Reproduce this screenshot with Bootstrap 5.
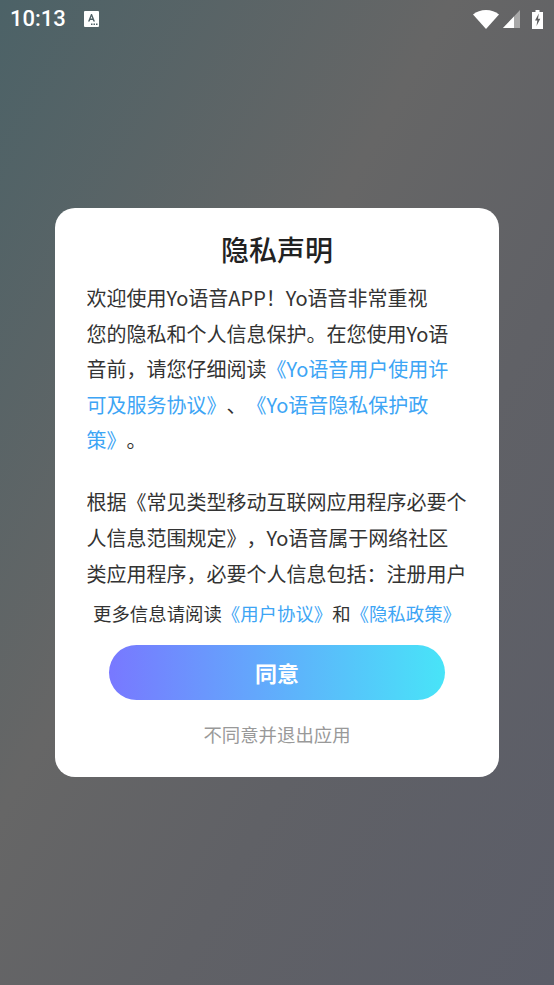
<!DOCTYPE html>
<html lang="zh-CN">
<head>
<meta charset="utf-8">
<title>隐私声明</title>
<link rel="stylesheet" href="https://cdn.jsdelivr.net/npm/bootstrap@5.3.0/dist/css/bootstrap.min.css">
<style>
html,body{height:100%;}
body{margin:0;font-family:"Noto Sans CJK SC","Noto Sans",sans-serif;background:linear-gradient(119deg,#4c6267 0%,#666666 41%,#606166 65%,#5b5d68 100%);overflow:hidden;text-spacing-trim:space-all;}
.stage{width:554px;height:985px;}
.statusline{height:38px;padding:0 11px 0 10px;color:#fff;}
.clock{font-family:Roboto,sans-serif;font-size:22px;font-weight:500;line-height:38px;}
.aicon{margin-left:18px;}
.sheet{width:444px;height:569px;margin:170px 0 0 55px;padding-top:23px;background:#fff;border-radius:20px;}
.sheet-title{font-size:28px;font-weight:500;line-height:36px;color:#222;margin:0;text-align:center;}
.scrollpane{height:322px;margin:13px 32px 0 31.5px;overflow:hidden;font-size:20px;line-height:35.6px;color:#333;}
.scrollpane p{margin:0 0 26.5px;}
.linktext{color:#3da5f5;text-decoration:none;}
.morerow{font-size:18.4px;line-height:26px;color:#333;text-align:center;margin-top:-2px;}
.agree{display:block;width:336px;height:55px;margin:19px auto 0;border:0;border-radius:28px;background:linear-gradient(90deg,#7878ff,#48e4f8);color:#fff;font-size:22px;font-weight:700;line-height:55px;padding:0;}
.decline{font-size:18.4px;line-height:26px;color:#999;text-align:center;margin-top:21px;}
</style>
</head>
<body>
<div class="stage">
  <div class="statusline d-flex align-items-center">
    <span class="clock">10:13</span>
    <svg class="aicon" width="15" height="16" viewBox="0 0 15 16"><rect width="15" height="16" rx="1" fill="#fff"/><path d="M4 10.500 7 3h1l3 7.500H9.400L8.800 9H6.200l-.6 1.500zM6.700 7.600h1.600L7.500 5.300z" fill="#4f6166"/><rect x="7" y="12.500" width="1.500" height="1.500" fill="#4f6166"/><rect x="9.500" y="12.500" width="1.500" height="1.500" fill="#4f6166"/><rect x="12" y="12.500" width="1.500" height="1.500" fill="#4f6166"/></svg>
    <div class="ms-auto d-flex align-items-center gap-1">
      <svg width="26" height="19" viewBox="0 0 26 19"><path d="M0 4.500C3.500 1.500 8 0 13 0s9.500 1.500 13 4.500L13 19z" fill="#fff"/></svg>
      <svg width="17" height="18" viewBox="0 0 17 18"><path d="M17 0v18H0z" fill="#a8a8a8"/><path d="M11 6.500V18H0z" fill="#fff"/></svg>
      <svg class="ms-2" width="11" height="19" viewBox="0 0 11 19"><path d="M3.500 0h4v2H11v17H0V2h3.500z" fill="#fff"/><path d="M6.800 3.500 3 10.500h2.300L4.500 16 8.300 8.800H6z" fill="#5f5f60"/></svg>
    </div>
  </div>
  <div class="sheet">
    <h1 class="sheet-title">隐私声明</h1>
    <div class="scrollpane">
      <p>欢迎使用Yo语音APP！Yo语音非常重视<br>您的隐私和个人信息保护。在您使用Yo语<br>音前，请您仔细阅读<a class="linktext" href="#">《Yo语音用户使用许<br>可及服务协议》</a>、<a class="linktext" href="#">《Yo语音隐私保护政<br>策》</a>。</p>
      <p>根据《常见类型移动互联网应用程序必要个<br>人信息范围规定》，Yo语音属于网络社区<br>类应用程序，必要个人信息包括：注册用户</p>
    </div>
    <div class="morerow">更多信息请阅读<a class="linktext" href="#">《用户协议》</a>和<a class="linktext" href="#">《隐私政策》</a></div>
    <button type="button" class="btn agree">同意</button>
    <div class="decline">不同意并退出应用</div>
  </div>
</div>
<script src="https://cdn.jsdelivr.net/npm/bootstrap@5.3.0/dist/js/bootstrap.bundle.min.js"></script>
</body>
</html>
